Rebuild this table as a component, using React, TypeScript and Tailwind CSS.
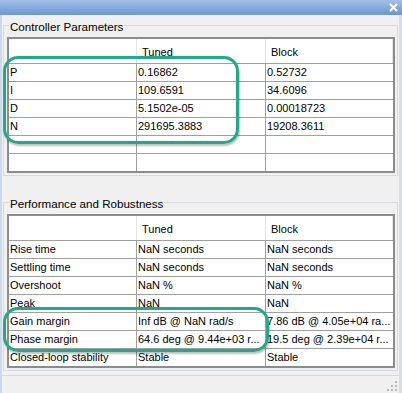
const controllerRows = [
  ["P", "0.16862", "0.52732"],
  ["I", "109.6591", "34.6096"],
  ["D", "5.1502e-05", "0.00018723"],
  ["N", "291695.3883", "19208.3611"],
  ["", "", ""],
  ["", "", ""],
];

const performanceRows = [
  ["Rise time", "NaN seconds", "NaN seconds"],
  ["Settling time", "NaN seconds", "NaN seconds"],
  ["Overshoot", "NaN %", "NaN %"],
  ["Peak", "NaN", "NaN"],
  ["Gain margin", "Inf dB @ NaN rad/s", "7.86 dB @ 4.05e+04 ra..."],
  ["Phase margin", "64.6 deg @ 9.44e+03 r...", "19.5 deg @ 2.39e+04 r..."],
  ["Closed-loop stability", "Stable", "Stable"],
];

const ResultTable = ({ rows }: { rows: string[][] }) => {
  return (
    <div className="border-2 border-[#8c8c8c] bg-white text-[11px] text-black">
      <div className="grid grid-cols-[128px_129px_127px] h-[25px] border-b border-[#a0a0a0]">
        <div className="border-r border-[#e3e3e3]"></div>
        <div className="flex items-center pl-[5px] pt-[2px] border-r border-[#e3e3e3]">Tuned</div>
        <div className="flex items-center pl-[5px] pt-[2px] border-r border-[#e3e3e3]">Block</div>
      </div>
      {rows.map((row, i) => (
        <div
          key={i}
          className={
            i < rows.length - 1
              ? "grid grid-cols-[128px_129px_127px] h-[18px] border-b border-[#a0a0a0]"
              : "grid grid-cols-[128px_129px_127px] h-[17px]"
          }
        >
          <div className="flex items-center pl-[1px] border-r border-[#a0a0a0] whitespace-nowrap overflow-hidden">
            {row[0]}
          </div>
          <div className="flex items-center pl-[1px] border-r border-[#a0a0a0] whitespace-nowrap overflow-hidden">
            {row[1]}
          </div>
          <div className="flex items-center pl-[1px] whitespace-nowrap overflow-hidden">{row[2]}</div>
        </div>
      ))}
    </div>
  );
};

const GroupBox = ({ title, rows, className }: { title: string; rows: string[][]; className: string }) => {
  return (
    <fieldset className={`border border-[#d5dbe0] ml-[1px] mr-[1px] pl-[3px] pr-[2px] pb-[2px] ${className}`}>
      <legend className="ml-[2px] px-[1px] pt-[3px] text-[11.6px] leading-[14px] text-black">{title}</legend>
      <div className="mt-[3px]">
        <ResultTable rows={rows} />
      </div>
    </fieldset>
  );
};

export default function App() {
  return (
    <div className="relative w-[402px] h-[393px] bg-[#f0f0f0] flex flex-col overflow-hidden font-['Liberation_Sans',Arial,sans-serif]">
      {/* title bar */}
      <div className="h-[15px] flex justify-end items-center pr-[4px] bg-gradient-to-b from-[#a3c0e6] to-[#6b97cf]">
        <svg width="9" height="9" viewBox="0 0 9 9">
          <path d="M1 1L8 8M8 1L1 8" stroke="#ffffff" strokeWidth="2" />
        </svg>
      </div>

      <div className="flex-1 flex flex-col border-l-2 border-l-[#cbd9eb] border-r-[3px] border-r-[#d6dee8]">
        <GroupBox title="Controller Parameters" rows={controllerRows} className="mt-[2px]" />
        <GroupBox title="Performance and Robustness" rows={performanceRows} className="mt-[18px]" />
        <div className="flex-1"></div>
        <div className="h-[18px] border-t border-[#d9d9d9] flex justify-end items-end pr-[1px] pb-[1px]">
          <svg width="11" height="11" viewBox="0 0 11 11">
            <rect x="8" y="0" width="2" height="2" fill="#b8b8b8" />
            <rect x="4" y="4" width="2" height="2" fill="#b8b8b8" />
            <rect x="8" y="4" width="2" height="2" fill="#b8b8b8" />
            <rect x="0" y="8" width="2" height="2" fill="#b8b8b8" />
            <rect x="4" y="8" width="2" height="2" fill="#b8b8b8" />
            <rect x="8" y="8" width="2" height="2" fill="#b8b8b8" />
          </svg>
        </div>
      </div>

      {/* annotation highlights */}
      <div className="absolute left-[3px] top-[56px] w-[236px] h-[88px] rounded-[15px] border-[3px] border-[#22a88b] shadow-[1px_2px_2px_rgba(0,0,0,0.25)]"></div>
      <div className="absolute left-[3px] top-[307px] w-[266px] h-[45px] rounded-[15px] border-[3px] border-[#22a88b] shadow-[1px_2px_2px_rgba(0,0,0,0.25)]"></div>
    </div>
  );
}
